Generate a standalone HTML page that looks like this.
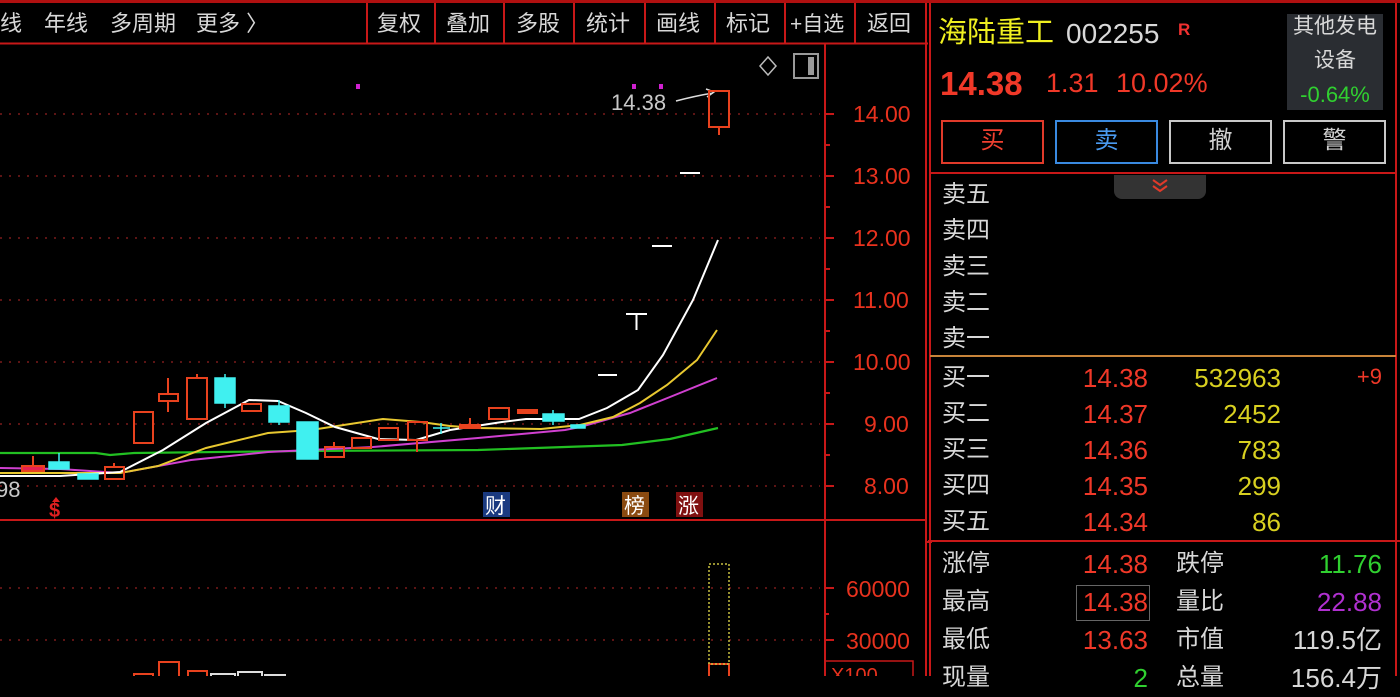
<!DOCTYPE html>
<html><head><meta charset="utf-8"><style>
html,body{margin:0;padding:0;background:#000;width:1400px;height:676px;overflow:hidden;font-family:"Liberation Sans","Noto Sans CJK SC",sans-serif}
.t{position:absolute;white-space:nowrap;line-height:1}
</style></head><body>
<svg width="1400" height="676" style="position:absolute;left:0;top:0" font-family="Liberation Sans, Noto Sans CJK SC, sans-serif">
<rect x="0" y="0" width="1400" height="3" fill="#b01010"/>
<line x1="0" y1="43.5" x2="928" y2="43.5" stroke="#c81818" stroke-width="2"/>
<g stroke="#c81818" stroke-width="2">
<line x1="367" y1="3" x2="367" y2="43"/><line x1="435" y1="3" x2="435" y2="43"/><line x1="504" y1="3" x2="504" y2="43"/><line x1="574" y1="3" x2="574" y2="43"/><line x1="645" y1="3" x2="645" y2="43"/><line x1="715" y1="3" x2="715" y2="43"/><line x1="785" y1="3" x2="785" y2="43"/><line x1="855" y1="3" x2="855" y2="43"/>
<line x1="825" y1="44" x2="825" y2="676"/>
<line x1="0" y1="520" x2="927" y2="520"/>
<line x1="926" y1="3" x2="926" y2="676"/>
<line x1="930" y1="3" x2="930" y2="676"/>
<line x1="1396" y1="3" x2="1396" y2="676"/>
<line x1="930" y1="173" x2="1396" y2="173"/>
<line x1="928" y1="541" x2="1400" y2="541"/>
</g>
<line x1="930" y1="356" x2="1396" y2="356" stroke="#c8843a" stroke-width="2"/>
<g fill="#d8d8d8" font-size="22">
<text x="0" y="31">线</text><text x="44" y="31">年线</text><text x="110" y="31">多周期</text><text x="196" y="31">更多 〉</text>
<text x="377" y="31">复权</text><text x="446" y="31">叠加</text><text x="516" y="31">多股</text><text x="586" y="31">统计</text><text x="656" y="31">画线</text><text x="726" y="31">标记</text><text x="790" y="31" font-size="21">+自选</text><text x="867" y="31">返回</text>
</g>
<g stroke="#7a1a1a" stroke-width="1.5" stroke-dasharray="2,7">
<line x1="0" y1="114" x2="820" y2="114"/><line x1="0" y1="176" x2="820" y2="176"/><line x1="0" y1="238" x2="820" y2="238"/><line x1="0" y1="300" x2="820" y2="300"/><line x1="0" y1="362" x2="820" y2="362"/><line x1="0" y1="424" x2="820" y2="424"/><line x1="0" y1="486" x2="820" y2="486"/>
<line x1="0" y1="588" x2="820" y2="588"/><line x1="0" y1="640" x2="820" y2="640"/>
</g>
<g stroke="#c81818" stroke-width="2">
<line x1="825" y1="114" x2="834" y2="114"/><line x1="825" y1="176" x2="834" y2="176"/><line x1="825" y1="238" x2="834" y2="238"/><line x1="825" y1="300" x2="834" y2="300"/><line x1="825" y1="362" x2="834" y2="362"/><line x1="825" y1="424" x2="834" y2="424"/><line x1="825" y1="486" x2="834" y2="486"/>
<line x1="825" y1="145" x2="830" y2="145"/><line x1="825" y1="207" x2="830" y2="207"/><line x1="825" y1="269" x2="830" y2="269"/><line x1="825" y1="331" x2="830" y2="331"/><line x1="825" y1="393" x2="830" y2="393"/><line x1="825" y1="455" x2="830" y2="455"/>
<line x1="825" y1="588" x2="834" y2="588"/><line x1="825" y1="640" x2="834" y2="640"/><line x1="825" y1="614" x2="829" y2="614"/>
<line x1="926" y1="542" x2="932" y2="542"/>
</g>
<g fill="#e8321e" font-size="23">
<text x="853" y="122">14.00</text><text x="853" y="184">13.00</text><text x="853" y="246">12.00</text><text x="853" y="308">11.00</text><text x="853" y="370">10.00</text><text x="864" y="432">9.00</text><text x="864" y="494">8.00</text>
<text x="846" y="597">60000</text><text x="846" y="649">30000</text>
</g>
<rect x="825" y="661" width="88" height="20" fill="none" stroke="#c81818" stroke-width="1.5"/>
<text x="831" y="682" fill="#e8321e" font-size="20">X100</text>
<path d="M768 57 L776 66 L768 75 L760 66 Z" fill="none" stroke="#bbb" stroke-width="1.5"/>
<rect x="794" y="54" width="24" height="24" fill="none" stroke="#999" stroke-width="2"/><rect x="808" y="57" width="6" height="18" fill="#999"/>
<rect x="356" y="84" width="4" height="5" fill="#d020d0"/><rect x="632" y="84" width="4" height="5" fill="#d020d0"/><rect x="659" y="84" width="4" height="5" fill="#d020d0"/>
<text x="611" y="110" fill="#c8c8c8" font-size="22">14.38</text>
<path d="M676 101 Q695 96 713 93 M706 89 L714 92 L707 97" fill="none" stroke="#ddd" stroke-width="1.5"/>
<polyline fill="none" stroke="#22c022" stroke-width="2.2" points="0,453 96,453 110,455 134,453 300,451 478,450 565,447 622,445 670,439 718,428"/>
<polyline fill="none" stroke="#d040d0" stroke-width="2" points="0,468 60,469 120,473 191,460 268,452 373,447 478,438 565,430 580,427 630,413 670,397 717,378"/>
<polyline fill="none" stroke="#e8c830" stroke-width="2" points="0,473 120,473 158,466 206,448 268,433 311,430 383,419 421,422 450,426 478,428 541,429 580,425 613,417 640,403 667,385 697,360 717,330"/>
<polyline fill="none" stroke="#ffffff" stroke-width="2" points="0,476 60,476 120,472 163,450 206,423 249,400 278,401 306,413 335,427 378,439 416,440 450,430 502,422 526,419 579,419 607,408 638,390 663,355 693,300 718,240"/>
<g stroke="#e8421e" stroke-width="2" fill="none">
<rect x="22" y="466" width="22" height="5" fill="#e82050"/><line x1="33" y1="456" x2="33" y2="466"/>
<rect x="105" y="467" width="19" height="12"/><line x1="114" y1="463" x2="114" y2="467"/>
<rect x="134" y="412" width="19" height="31"/>
<rect x="159" y="394" width="19" height="7"/><line x1="168" y1="378" x2="168" y2="394"/><line x1="168" y1="401" x2="168" y2="412"/>
<rect x="187" y="378" width="20" height="41"/><line x1="197" y1="374" x2="197" y2="378"/>
<rect x="242" y="404" width="19" height="7"/>
<rect x="325" y="447" width="19" height="10"/><line x1="334" y1="442" x2="334" y2="447"/>
<rect x="352" y="438" width="19" height="10"/>
<rect x="379" y="428" width="19" height="12"/>
<rect x="408" y="422" width="19" height="18"/><line x1="417" y1="440" x2="417" y2="452"/>
<rect x="460" y="425" width="20" height="3" fill="#e8421e"/><line x1="470" y1="418" x2="470" y2="425"/>
<rect x="489" y="408" width="20" height="11"/>
<rect x="518" y="410" width="19" height="3" fill="#e8421e"/>
<rect x="709" y="91" width="20" height="36"/><line x1="719" y1="127" x2="719" y2="135"/>
</g>
<g fill="#40f0f0" stroke="#40f0f0" stroke-width="1.5">
<rect x="49" y="462" width="20" height="7"/><line x1="59" y1="453" x2="59" y2="462"/>
<rect x="78" y="474" width="20" height="5"/>
<rect x="215" y="378" width="20" height="25"/><line x1="225" y1="374" x2="225" y2="408"/>
<rect x="269" y="406" width="20" height="16"/><line x1="279" y1="400" x2="279" y2="425"/>
<rect x="297" y="422" width="21" height="37"/>
<line x1="433" y1="428" x2="450" y2="428"/><line x1="441" y1="423" x2="441" y2="434"/>
<rect x="543" y="414" width="21" height="7"/><line x1="553" y1="410" x2="553" y2="425"/>
<rect x="571" y="425" width="14" height="3"/>
</g>
<g stroke="#fff" stroke-width="2">
<line x1="598" y1="375" x2="617" y2="375"/>
<line x1="626" y1="314" x2="647" y2="314"/><line x1="636.5" y1="314" x2="636.5" y2="330"/>
<line x1="652" y1="246" x2="672" y2="246"/>
<line x1="680" y1="173" x2="700" y2="173"/>
</g>
<text x="-4" y="497" fill="#c8c8c8" font-size="22">98</text>
<text x="49" y="517" fill="#e02020" font-size="20" font-weight="bold">$</text>
<path d="M52 502 L56 497 L60 502 Z" fill="#e02020"/>
<rect x="483" y="492" width="27" height="25" fill="#1a3a80"/><text x="485" y="513" fill="#fff" font-size="21">财</text>
<rect x="622" y="492" width="27" height="25" fill="#8a4a10"/><text x="624" y="513" fill="#fff" font-size="21">榜</text>
<rect x="676" y="492" width="27" height="25" fill="#801010"/><text x="678" y="513" fill="#fff" font-size="21">涨</text>
<g fill="none" stroke="#e8421e" stroke-width="2">
<rect x="134" y="674" width="19" height="6"/><rect x="159" y="662" width="20" height="18"/><rect x="188" y="671" width="19" height="9"/>
<rect x="709" y="664" width="20" height="16"/>
</g>
<g fill="none" stroke="#ddd" stroke-width="2"><rect x="211" y="674" width="24" height="6"/><rect x="238" y="672" width="24" height="8"/><rect x="265" y="675" width="20" height="6"/></g>
<rect x="709" y="564" width="20" height="100" fill="none" stroke="#c8c040" stroke-width="1.5" stroke-dasharray="2,2"/>
</svg>

<div class="t" style="left:938px;top:19px;font-size:29px;color:#f0f020">海陆重工</div>
<div class="t" style="left:1066px;top:20px;font-size:28px;color:#d8d8d8">002255</div>
<div class="t" style="left:1178px;top:21px;font-size:17px;color:#f03030;font-weight:bold">R</div>
<div class="t" style="left:940px;top:67px;font-size:33px;color:#f03828;font-weight:bold">14.38</div>
<div class="t" style="left:1046px;top:70px;font-size:27px;color:#f03828">1.31</div>
<div class="t" style="left:1116px;top:70px;font-size:27px;color:#f03828">10.02%</div>
<div style="position:absolute;left:1287px;top:14px;width:96px;height:96px;background:#2a2d32"></div>
<div class="t" style="left:1287px;top:16px;width:96px;text-align:center;font-size:21px;color:#d8d8d8">其他发电</div>
<div class="t" style="left:1287px;top:50px;width:96px;text-align:center;font-size:21px;color:#d8d8d8">设备</div>
<div class="t" style="left:1287px;top:84px;width:96px;text-align:center;font-size:22px;color:#30d030">-0.64%</div>
<div style="position:absolute;left:941px;top:120px;width:99px;height:40px;border:2px solid #e03a2a"></div>
<div style="position:absolute;left:1055px;top:120px;width:99px;height:40px;border:2px solid #3a8ae0"></div>
<div style="position:absolute;left:1169px;top:120px;width:99px;height:40px;border:2px solid #c8c8c8"></div>
<div style="position:absolute;left:1283px;top:120px;width:99px;height:40px;border:2px solid #c8c8c8"></div>
<div class="t" style="left:941px;top:129px;width:103px;text-align:center;font-size:24px;color:#f04030">买</div>
<div class="t" style="left:1055px;top:129px;width:103px;text-align:center;font-size:24px;color:#4a9af0">卖</div>
<div class="t" style="left:1169px;top:129px;width:103px;text-align:center;font-size:24px;color:#d0d0d0">撤</div>
<div class="t" style="left:1283px;top:129px;width:103px;text-align:center;font-size:24px;color:#d0d0d0">警</div>
<div style="position:absolute;left:1114px;top:175px;width:92px;height:24px;background:#333;border-radius:0 0 8px 8px"></div>
<svg style="position:absolute;left:1150px;top:178px" width="20" height="16"><path d="M3 2 L10 7 L17 2 M3 8 L10 13 L17 8" fill="none" stroke="#e03a2a" stroke-width="2"/></svg>
<div style="position:absolute;left:942px;top:177px;font-size:24px;color:#d8d8d8;line-height:36px">卖五<br>卖四<br>卖三<br>卖二<br>卖一</div>
<div style="position:absolute;left:942px;top:360px;font-size:24px;color:#d8d8d8;line-height:36px">买一<br>买二<br>买三<br>买四<br>买五</div>
<div style="position:absolute;left:1040px;top:360px;width:108px;text-align:right;font-size:26px;color:#f03828;line-height:36px">14.38<br>14.37<br>14.36<br>14.35<br>14.34</div>
<div style="position:absolute;left:1160px;top:360px;width:121px;text-align:right;font-size:26px;color:#d8d020;line-height:36px">532963<br>2452<br>783<br>299<br>86</div>
<div class="t" style="left:1340px;top:366px;width:42px;text-align:right;font-size:22px;color:#f03828">+9</div>
<div style="position:absolute;left:942px;top:545px;font-size:24px;color:#d8d8d8;line-height:38px">涨停<br>最高<br>最低<br>现量</div>
<div style="position:absolute;left:1040px;top:545px;width:108px;text-align:right;font-size:26px;color:#f03828;line-height:38px">14.38<br>14.38<br>13.63<br><span style="color:#30d030">2</span></div>
<div style="position:absolute;left:1076px;top:585px;width:72px;height:34px;border:1px solid #666"></div>
<div style="position:absolute;left:1176px;top:545px;font-size:24px;color:#d8d8d8;line-height:38px">跌停<br>量比<br>市值<br>总量</div>
<div style="position:absolute;left:1260px;top:545px;width:122px;text-align:right;font-size:26px;line-height:38px;color:#d8d8d8"><span style="color:#30d030">11.76</span><br><span style="color:#b030d0">22.88</span><br>119.5亿<br>156.4万</div>
</body></html>
